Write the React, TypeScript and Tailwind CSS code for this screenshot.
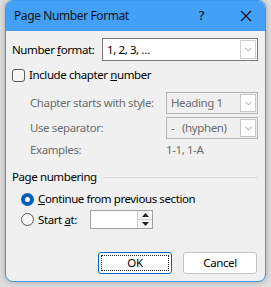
import { ChevronDown } from 'lucide-react'

function Chevron({ disabled }: { disabled?: boolean }) {
    return (
        <div className={`w-[16px] shrink-0 self-stretch my-[1px] mr-[1px] bg-white border ${disabled ? 'border-[#c8c8c8]' : 'border-[#d0d0d0]'} flex items-center justify-center`}>
            <ChevronDown size={11} strokeWidth={1.3} className="text-[#555]" />
        </div>
    )
}

function Radio({ checked }: { checked?: boolean }) {
    if (checked) {
        return (
            <div className="w-[13px] h-[13px] shrink-0 rounded-full bg-[#005fb8] flex items-center justify-center">
                <div className="w-[5px] h-[5px] rounded-full bg-white" />
            </div>
        )
    }
    return <div className="w-[13px] h-[13px] shrink-0 rounded-full border border-[#5c5c5c] bg-[#f6f6f6]" />
}

export default function App() {
    return (
        <div className="w-[271px] h-[287px] bg-[#dedede] overflow-hidden relative text-[11.5px] tracking-[-0.4px] text-black whitespace-nowrap" style={{ fontFamily: '"Noto Sans", "Open Sans", sans-serif' }}>
            <div className="ml-[5px] w-[261px] h-[282px] flex flex-col border border-[#3d95ee] rounded-[8px] overflow-hidden shadow-[0_0_6px_rgba(0,0,0,0.25)] bg-[#f0f0f0]">
                {/* Title bar */}
                <div className="h-[30px] bg-[#42a0f8] flex items-center pl-[8px] shrink-0">
                    <span className="text-[12px] text-[#111]">Page Number Format</span>
                    <span className="ml-auto mr-[36px] text-[13px]">?</span>
                    <svg width="12" height="12" viewBox="0 0 12 12" className="mr-[13px]">
                        <path d="M1 1 L11 11 M11 1 L1 11" stroke="#111" strokeWidth="1.1" />
                    </svg>
                </div>

                {/* Body */}
                <div className="flex flex-col pl-[6px] pr-[7px] pt-[7px]">
                    <div className="flex items-center h-[23px]">
                        <span className="w-[90px] shrink-0">Number <span className="underline">f</span>ormat:</span>
                        <div className="flex-1 h-full bg-white border border-[#7a7a7a] flex items-center">
                            <span className="pl-[4px] flex-1">1, 2, 3, …</span>
                            <Chevron />
                        </div>
                    </div>

                    <div className="flex items-center h-[14px] mt-[7px] gap-[4px]">
                        <div className="w-[13px] h-[13px] shrink-0 rounded-[3px] border border-[#5c5c5c] bg-[#f6f6f6]" />
                        <span>Include chapter <span className="underline">n</span>umber</span>
                    </div>

                    <div className="flex flex-col pl-[18px] text-[#6d6d6d]">
                        <div className="flex items-center h-[22px] mt-[10px]">
                            <span className="w-[136px] shrink-0">Chapter starts with style:</span>
                            <div className="flex-1 h-full border border-[#b5b5b5] flex items-center">
                                <span className="pl-[4px] flex-1">Heading 1</span>
                                <Chevron disabled />
                            </div>
                        </div>
                        <div className="flex items-center h-[22px] mt-[3px]">
                            <span className="w-[136px] shrink-0">Use separator:</span>
                            <div className="flex-1 h-full border border-[#b5b5b5] flex items-center">
                                <span className="pl-[4px] flex-1">-&nbsp;&nbsp;&nbsp;(hyphen)</span>
                                <Chevron disabled />
                            </div>
                        </div>
                        <div className="flex items-center h-[14px] mt-[4px]">
                            <span className="w-[136px] shrink-0">Examples:</span>
                            <span>1-1, 1-A</span>
                        </div>
                    </div>

                    <div className="flex items-center h-[14px] mt-[13px]">
                        <span className="w-[90px] shrink-0">Page numbering</span>
                        <div className="flex-1 h-px bg-[#dcdcdc]" />
                    </div>

                    <div className="flex flex-col pl-[9px]">
                        <div className="flex items-center h-[14px] mt-[8px] gap-[4px]">
                            <Radio checked />
                            <span><span className="underline">C</span>ontinue from previous section</span>
                        </div>
                        <div className="flex items-center h-[19px] mt-[4px]">
                            <Radio />
                            <span className="w-[56px] pl-[4px] shrink-0">Start <span className="underline">a</span>t:</span>
                            <div className="w-[63px] h-full bg-white border border-[#a0a0a0] flex justify-end">
                                <div className="w-[15px] flex flex-col border-l border-[#d0d0d0]">
                                    <div className="flex-1 flex items-center justify-center border-b border-[#d0d0d0] bg-[#f4f4f4]">
                                        <svg width="7" height="4" viewBox="0 0 7 4"><path d="M0 4 L3.5 0 L7 4 Z" fill="#222" /></svg>
                                    </div>
                                    <div className="flex-1 flex items-center justify-center bg-[#f4f4f4]">
                                        <svg width="7" height="4" viewBox="0 0 7 4"><path d="M0 0 L3.5 4 L7 0 Z" fill="#222" /></svg>
                                    </div>
                                </div>
                            </div>
                        </div>
                    </div>

                    <div className="flex justify-end gap-[11px] mt-[23px] pr-[1px]">
                        <button className="w-[74px] h-[22px] bg-white border border-[#0067c0] rounded-[3px] p-[2px]">
                            <div className="w-full h-full border border-dotted border-[#222] flex items-center justify-center">OK</div>
                        </button>
                        <button className="w-[74px] h-[22px] bg-white border border-[#c4c4c4] rounded-[3px] flex items-center justify-center">Cancel</button>
                    </div>
                </div>
            </div>
        </div>
    )
}
